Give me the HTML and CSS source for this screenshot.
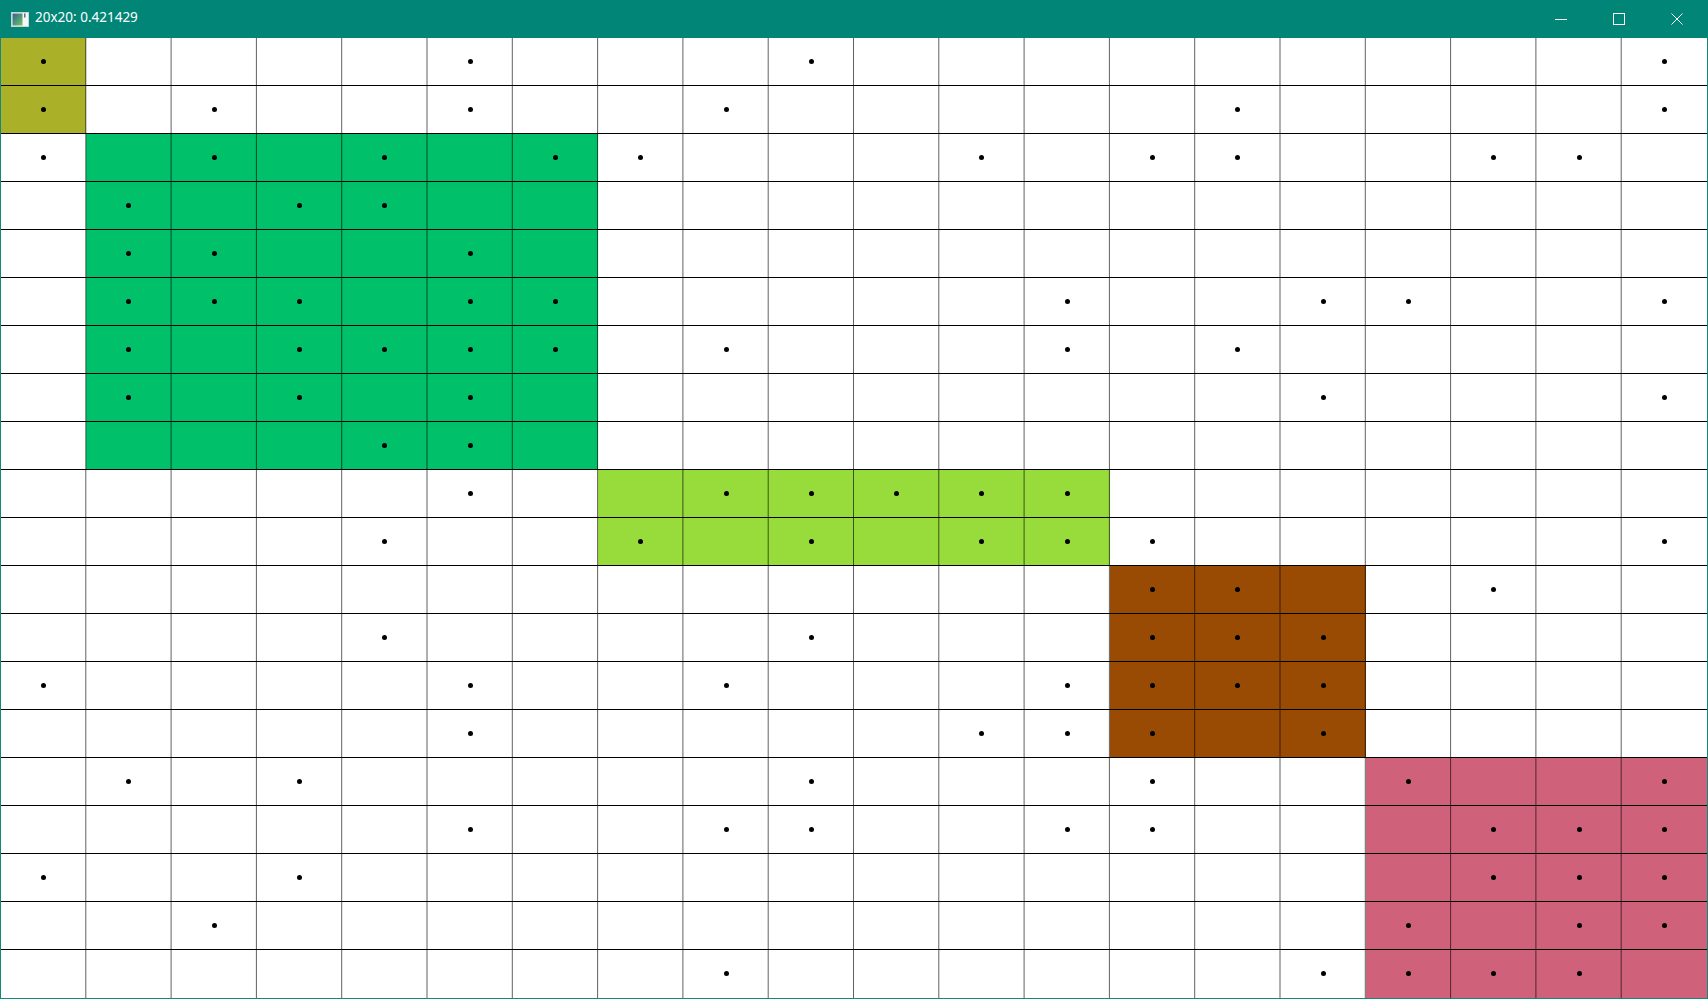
FILE: index.html
```html
<!DOCTYPE html>
<html>
<head>
<meta charset="utf-8">
<title>20x20: 0.421429</title>
<link rel="stylesheet" href="styles.css">
</head>
<body>
<div class="window">
  <header class="titlebar">
    <svg class="appicon" width="18" height="15" viewBox="0 0 18 15">
      <defs>
        <linearGradient id="ig" x1="0" y1="0" x2="1" y2="1">
          <stop offset="0" stop-color="#3d5f86"/>
          <stop offset="0.55" stop-color="#4f9a7c"/>
          <stop offset="1" stop-color="#7fc35a"/>
        </linearGradient>
      </defs>
      <rect x="0.5" y="0.5" width="17" height="14" fill="#f4f6f8" stroke="#c9d3dc"/>
      <rect x="1.5" y="1.5" width="10" height="12" fill="url(#ig)"/>
      <rect x="13" y="1.5" width="1.5" height="4" fill="#5b6f7d"/>
    </svg>
    <span class="title">20x20: 0.421429</span>
    <div class="controls">
      <div class="btn"><svg width="14" height="14" viewBox="0 0 14 14"><path d="M1 7.5H13" stroke="#fff" stroke-width="1"/></svg></div>
      <div class="btn"><svg width="14" height="14" viewBox="0 0 14 14"><rect x="1.5" y="1.5" width="11" height="11" fill="none" stroke="#fff" stroke-width="1"/></svg></div>
      <div class="btn"><svg width="14" height="14" viewBox="0 0 14 14"><path d="M1.5 1.5L12.5 12.5M12.5 1.5L1.5 12.5" stroke="#fff" stroke-width="1"/></svg></div>
    </div>
  </header>
  <main class="grid">
    <!-- row 0 -->
    <div class="c o"><i></i></div><div class="c"></div><div class="c"></div><div class="c"></div><div class="c"></div><div class="c"><i></i></div><div class="c"></div><div class="c"></div><div class="c"></div><div class="c"><i></i></div><div class="c"></div><div class="c"></div><div class="c"></div><div class="c"></div><div class="c"></div><div class="c"></div><div class="c"></div><div class="c"></div><div class="c"></div><div class="c"><i></i></div>
    <!-- row 1 -->
    <div class="c o"><i></i></div><div class="c"></div><div class="c"><i></i></div><div class="c"></div><div class="c"></div><div class="c"><i></i></div><div class="c"></div><div class="c"></div><div class="c"><i></i></div><div class="c"></div><div class="c"></div><div class="c"></div><div class="c"></div><div class="c"></div><div class="c"><i></i></div><div class="c"></div><div class="c"></div><div class="c"></div><div class="c"></div><div class="c"><i></i></div>
    <!-- row 2 -->
    <div class="c"><i></i></div><div class="c g"></div><div class="c g"><i></i></div><div class="c g"></div><div class="c g"><i></i></div><div class="c g"></div><div class="c g"><i></i></div><div class="c"><i></i></div><div class="c"></div><div class="c"></div><div class="c"></div><div class="c"><i></i></div><div class="c"></div><div class="c"><i></i></div><div class="c"><i></i></div><div class="c"></div><div class="c"></div><div class="c"><i></i></div><div class="c"><i></i></div><div class="c"></div>
    <!-- row 3 -->
    <div class="c"></div><div class="c g"><i></i></div><div class="c g"></div><div class="c g"><i></i></div><div class="c g"><i></i></div><div class="c g"></div><div class="c g"></div><div class="c"></div><div class="c"></div><div class="c"></div><div class="c"></div><div class="c"></div><div class="c"></div><div class="c"></div><div class="c"></div><div class="c"></div><div class="c"></div><div class="c"></div><div class="c"></div><div class="c"></div>
    <!-- row 4 -->
    <div class="c"></div><div class="c g"><i></i></div><div class="c g"><i></i></div><div class="c g"></div><div class="c g"></div><div class="c g"><i></i></div><div class="c g"></div><div class="c"></div><div class="c"></div><div class="c"></div><div class="c"></div><div class="c"></div><div class="c"></div><div class="c"></div><div class="c"></div><div class="c"></div><div class="c"></div><div class="c"></div><div class="c"></div><div class="c"></div>
    <!-- row 5 -->
    <div class="c"></div><div class="c g"><i></i></div><div class="c g"><i></i></div><div class="c g"><i></i></div><div class="c g"></div><div class="c g"><i></i></div><div class="c g"><i></i></div><div class="c"></div><div class="c"></div><div class="c"></div><div class="c"></div><div class="c"></div><div class="c"><i></i></div><div class="c"></div><div class="c"></div><div class="c"><i></i></div><div class="c"><i></i></div><div class="c"></div><div class="c"></div><div class="c"><i></i></div>
    <!-- row 6 -->
    <div class="c"></div><div class="c g"><i></i></div><div class="c g"></div><div class="c g"><i></i></div><div class="c g"><i></i></div><div class="c g"><i></i></div><div class="c g"><i></i></div><div class="c"></div><div class="c"><i></i></div><div class="c"></div><div class="c"></div><div class="c"></div><div class="c"><i></i></div><div class="c"></div><div class="c"><i></i></div><div class="c"></div><div class="c"></div><div class="c"></div><div class="c"></div><div class="c"></div>
    <!-- row 7 -->
    <div class="c"></div><div class="c g"><i></i></div><div class="c g"></div><div class="c g"><i></i></div><div class="c g"></div><div class="c g"><i></i></div><div class="c g"></div><div class="c"></div><div class="c"></div><div class="c"></div><div class="c"></div><div class="c"></div><div class="c"></div><div class="c"></div><div class="c"></div><div class="c"><i></i></div><div class="c"></div><div class="c"></div><div class="c"></div><div class="c"><i></i></div>
    <!-- row 8 -->
    <div class="c"></div><div class="c g"></div><div class="c g"></div><div class="c g"></div><div class="c g"><i></i></div><div class="c g"><i></i></div><div class="c g"></div><div class="c"></div><div class="c"></div><div class="c"></div><div class="c"></div><div class="c"></div><div class="c"></div><div class="c"></div><div class="c"></div><div class="c"></div><div class="c"></div><div class="c"></div><div class="c"></div><div class="c"></div>
    <!-- row 9 -->
    <div class="c"></div><div class="c"></div><div class="c"></div><div class="c"></div><div class="c"></div><div class="c"><i></i></div><div class="c"></div><div class="c l"></div><div class="c l"><i></i></div><div class="c l"><i></i></div><div class="c l"><i></i></div><div class="c l"><i></i></div><div class="c l"><i></i></div><div class="c"></div><div class="c"></div><div class="c"></div><div class="c"></div><div class="c"></div><div class="c"></div><div class="c"></div>
    <!-- row 10 -->
    <div class="c"></div><div class="c"></div><div class="c"></div><div class="c"></div><div class="c"><i></i></div><div class="c"></div><div class="c"></div><div class="c l"><i></i></div><div class="c l"></div><div class="c l"><i></i></div><div class="c l"></div><div class="c l"><i></i></div><div class="c l"><i></i></div><div class="c"><i></i></div><div class="c"></div><div class="c"></div><div class="c"></div><div class="c"></div><div class="c"></div><div class="c"><i></i></div>
    <!-- row 11 -->
    <div class="c"></div><div class="c"></div><div class="c"></div><div class="c"></div><div class="c"></div><div class="c"></div><div class="c"></div><div class="c"></div><div class="c"></div><div class="c"></div><div class="c"></div><div class="c"></div><div class="c"></div><div class="c b"><i></i></div><div class="c b"><i></i></div><div class="c b"></div><div class="c"></div><div class="c"><i></i></div><div class="c"></div><div class="c"></div>
    <!-- row 12 -->
    <div class="c"></div><div class="c"></div><div class="c"></div><div class="c"></div><div class="c"><i></i></div><div class="c"></div><div class="c"></div><div class="c"></div><div class="c"></div><div class="c"><i></i></div><div class="c"></div><div class="c"></div><div class="c"></div><div class="c b"><i></i></div><div class="c b"><i></i></div><div class="c b"><i></i></div><div class="c"></div><div class="c"></div><div class="c"></div><div class="c"></div>
    <!-- row 13 -->
    <div class="c"><i></i></div><div class="c"></div><div class="c"></div><div class="c"></div><div class="c"></div><div class="c"><i></i></div><div class="c"></div><div class="c"></div><div class="c"><i></i></div><div class="c"></div><div class="c"></div><div class="c"></div><div class="c"><i></i></div><div class="c b"><i></i></div><div class="c b"><i></i></div><div class="c b"><i></i></div><div class="c"></div><div class="c"></div><div class="c"></div><div class="c"></div>
    <!-- row 14 -->
    <div class="c"></div><div class="c"></div><div class="c"></div><div class="c"></div><div class="c"></div><div class="c"><i></i></div><div class="c"></div><div class="c"></div><div class="c"></div><div class="c"></div><div class="c"></div><div class="c"><i></i></div><div class="c"><i></i></div><div class="c b"><i></i></div><div class="c b"></div><div class="c b"><i></i></div><div class="c"></div><div class="c"></div><div class="c"></div><div class="c"></div>
    <!-- row 15 -->
    <div class="c"></div><div class="c"><i></i></div><div class="c"></div><div class="c"><i></i></div><div class="c"></div><div class="c"></div><div class="c"></div><div class="c"></div><div class="c"></div><div class="c"><i></i></div><div class="c"></div><div class="c"></div><div class="c"></div><div class="c"><i></i></div><div class="c"></div><div class="c"></div><div class="c p"><i></i></div><div class="c p"></div><div class="c p"></div><div class="c p"><i></i></div>
    <!-- row 16 -->
    <div class="c"></div><div class="c"></div><div class="c"></div><div class="c"></div><div class="c"></div><div class="c"><i></i></div><div class="c"></div><div class="c"></div><div class="c"><i></i></div><div class="c"><i></i></div><div class="c"></div><div class="c"></div><div class="c"><i></i></div><div class="c"><i></i></div><div class="c"></div><div class="c"></div><div class="c p"></div><div class="c p"><i></i></div><div class="c p"><i></i></div><div class="c p"><i></i></div>
    <!-- row 17 -->
    <div class="c"><i></i></div><div class="c"></div><div class="c"></div><div class="c"><i></i></div><div class="c"></div><div class="c"></div><div class="c"></div><div class="c"></div><div class="c"></div><div class="c"></div><div class="c"></div><div class="c"></div><div class="c"></div><div class="c"></div><div class="c"></div><div class="c"></div><div class="c p"></div><div class="c p"><i></i></div><div class="c p"><i></i></div><div class="c p"><i></i></div>
    <!-- row 18 -->
    <div class="c"></div><div class="c"></div><div class="c"><i></i></div><div class="c"></div><div class="c"></div><div class="c"></div><div class="c"></div><div class="c"></div><div class="c"></div><div class="c"></div><div class="c"></div><div class="c"></div><div class="c"></div><div class="c"></div><div class="c"></div><div class="c"></div><div class="c p"><i></i></div><div class="c p"></div><div class="c p"><i></i></div><div class="c p"><i></i></div>
    <!-- row 19 -->
    <div class="c"></div><div class="c"></div><div class="c"></div><div class="c"></div><div class="c"></div><div class="c"></div><div class="c"></div><div class="c"></div><div class="c"><i></i></div><div class="c"></div><div class="c"></div><div class="c"></div><div class="c"></div><div class="c"></div><div class="c"></div><div class="c"><i></i></div><div class="c p"><i></i></div><div class="c p"><i></i></div><div class="c p"><i></i></div><div class="c p"></div>

    <svg class="lines" width="1706" height="960" viewBox="0 0 1706 960">
      <path class="vl" d="M84.8 0V960M170.1 0V960M255.4 0V960M340.7 0V960M426 0V960M511.3 0V960M596.6 0V960M681.9 0V960M767.2 0V960M852.5 0V960M937.8 0V960M1023.1 0V960M1108.4 0V960M1193.7 0V960M1279 0V960M1364.3 0V960M1449.6 0V960M1534.9 0V960M1620.2 0V960"/>
      <path class="hl" d="M0 47.5H1706M0 95.5H1706M0 143.5H1706M0 191.5H1706M0 239.5H1706M0 287.5H1706M0 335.5H1706M0 383.5H1706M0 431.5H1706M0 479.5H1706M0 527.5H1706M0 575.5H1706M0 623.5H1706M0 671.5H1706M0 719.5H1706M0 767.5H1706M0 815.5H1706M0 863.5H1706M0 911.5H1706"/>
    </svg>
  </main>
</div>
</body>
</html>
```

FILE: styles.css
```css
html, body {
  margin: 0;
  padding: 0;
  background: #ffffff;
}

.window {
  width: 1708px;
  height: 999px;
  box-sizing: border-box;
  display: flex;
  flex-direction: column;
  background: #14897b;
  overflow: hidden;
}

.titlebar {
  height: 38px;
  flex: 0 0 38px;
  display: flex;
  align-items: center;
  background: #008576;
  color: #ffffff;
  padding: 0 2px 0 11px;
  font-family: "Noto Sans", "Open Sans", sans-serif;
  font-size: 13.5px;
}

.appicon {
  display: block;
  flex: 0 0 auto;
}

.title {
  margin-left: 6px;
  line-height: 1;
  padding-bottom: 2px;
  white-space: nowrap;
}

.controls {
  margin-left: auto;
  display: flex;
  height: 100%;
}

.btn {
  width: 58px;
  height: 100%;
  display: flex;
  align-items: center;
  justify-content: center;
}

.btn svg {
  display: block;
}

.grid {
  position: relative;
  width: 1706px;
  height: 960px;
  margin: 0 1px;
  display: grid;
  grid-template-columns: repeat(20, 1fr);
  grid-template-rows: 47px repeat(18, 48px) 49px;
  background: #ffffff;
}

.c {
  display: flex;
  align-items: center;
  justify-content: center;
  background: #ffffff;
}

.c i {
  display: block;
  width: 5px;
  height: 5px;
  border-radius: 50%;
  background: #000000;
}

.c.o { background: #aab129; }
.c.g { background: #00c16a; }
.c.l { background: #98dc3c; }
.c.b { background: #994b04; }
.c.p { background: #d0617a; }

.lines {
  position: absolute;
  left: 0;
  top: 0;
  pointer-events: none;
}

.lines .vl {
  stroke: #000000;
  stroke-opacity: 0.62;
  stroke-width: 1;
  fill: none;
}

.lines .hl {
  stroke: #000000;
  stroke-width: 1;
  fill: none;
  shape-rendering: crispEdges;
}
```
